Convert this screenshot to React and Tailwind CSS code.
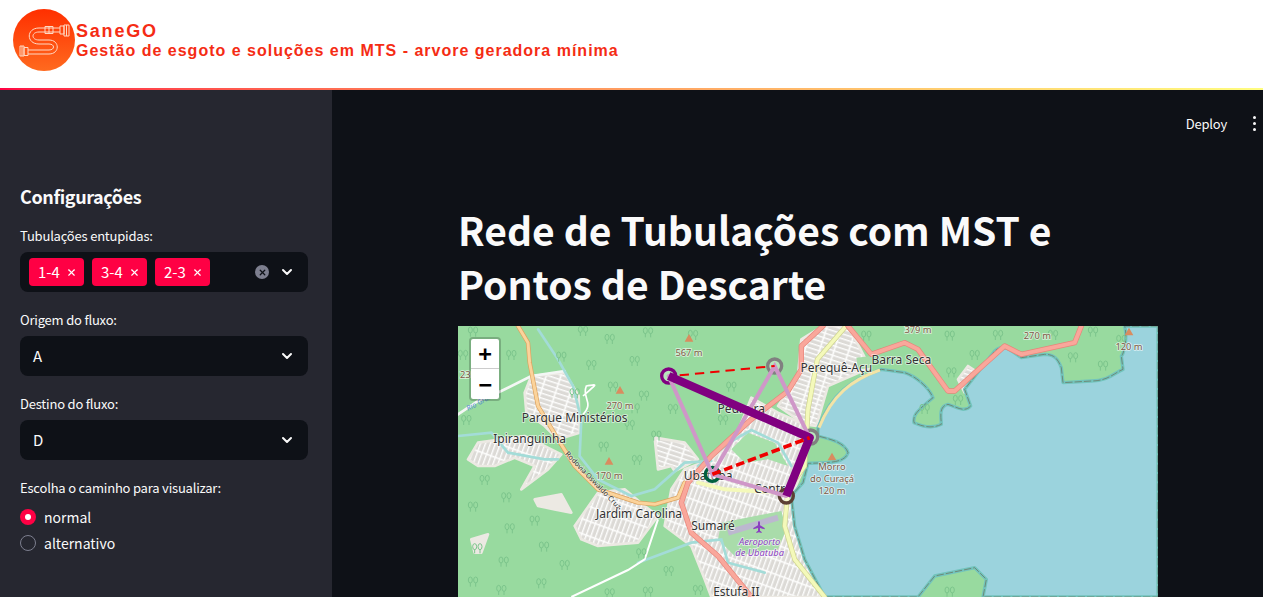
import React from "react";
import { ChevronDown, X } from "lucide-react";

// map coords are the 3x zoomed ones, viewBox is 2100x813 for a 700x271 box
const trees = [
  [15, 90], [45, 20], [90, 90], [160, 90], [310, 95], [375, 18], [455, 42], [570, 22], [705, 30], [530, 108],
  [400, 120], [350, 205], [465, 185], [558, 212], [645, 252], [530, 250], [820, 185], [795, 285],
  [25, 285], [515, 300], [437, 365], [537, 405], [595, 332], [80, 465], [145, 517], [45, 545], [230, 587],
  [155, 610], [258, 665], [58, 670], [320, 720], [137, 710], [45, 770], [130, 795], [250, 775], [455, 805],
  [550, 685], [632, 738], [720, 795], [570, 800], [1225, 32], [1475, 32], [1620, 30], [1785, 30], [1905, 20],
  [1550, 90], [1480, 142], [1845, 97], [1935, 122], [1400, 252], [1500, 225], [1990, 45], [1475, 800],
];

const peaks = [
  [693, 36], [486, 192], [453, 405], [1122, 392], [2013, 17],
];

const labels = [
  ["567 m", 693, 90, "peak"], ["270 m", 486, 248, "peak"], ["170 m", 453, 460, "peak"], ["23", 22, 155, "peak"],
  ["379 m", 1380, 20, "peak"], ["270 m", 1738, 40, "peak"], ["120 m", 2013, 72, "peak"],
  ["Morro", 1122, 433, "peak"], ["do Curaçá", 1122, 468, "peak"], ["120 m", 1122, 504, "peak"],
  ["Parque Ministérios", 350, 289, "place"], ["Ipiranguinha", 215, 350, "place"], ["Jardim Carolina", 543, 575, "place"],
  ["Sumaré", 765, 612, "place"], ["Estufa II", 835, 811, "place"], ["Ubatuba", 750, 461, "place"], ["Pedreira", 850, 262, "place"],
  ["Centro", 945, 502, "place"], ["Perequê-Açu", 1135, 137, "place"], ["Barra Seca", 1330, 115, "place"],
];

function Trees() {
  return (
    <g fill="none" stroke="#7cc58c" strokeWidth="3">
      {trees.map(([x, y], i) => (
        <g key={i}>
          <ellipse cx={x - 8} cy={y - 8} rx="6" ry="9" />
          <ellipse cx={x + 8} cy={y - 8} rx="6" ry="9" />
          <path d={`M${x - 8} ${y} v12 M${x + 8} ${y} v12`} />
        </g>
      ))}
    </g>
  );
}

function MapSvg() {
  const coast =
    "M2100 0 L2000 0 C2010 40 1995 90 1990 90 L1995 130 C1970 140 1950 165 1900 165 L1815 170 L1810 125 C1800 100 1790 85 1760 85 L1690 95 C1660 75 1640 50 1610 75 L1520 190 L1538 240 C1520 260 1500 245 1470 235 C1440 240 1450 280 1450 295 C1420 310 1390 300 1368 290 C1365 270 1370 260 1425 215 C1410 180 1370 150 1340 140 L1270 130 C1180 160 1120 205 1080 305 L1080 330 C1120 340 1160 350 1170 380 C1160 410 1120 410 1050 412 L1035 470 L1000 510 L1010 600 L1040 700 L1100 813 L1380 813 L1430 750 L1550 725 L1585 760 L1575 813 L2100 813 Z";
  const city =
    "M680 430 L760 400 L830 340 L880 215 L960 260 L1050 300 L1040 420 L1000 510 L1010 600 L1040 700 L1090 813 L760 813 L740 760 L700 660 L620 600 L640 490 Z";
  const pereque = "M1030 40 L1095 0 L1170 0 L1197 50 L1236 125 L1110 180 L1075 300 L1040 295 L960 240 L1020 150 Z";
  const motorwayA = "M880 813 L780 690 L700 620 L670 530 L690 470 L760 390 L880 280 L990 195 L1030 130 L1030 60 L1095 0";
  const motorwayB = "M1170 0 L1240 85 L1340 50 L1380 70 L1470 195 L1490 195 L1640 60 L1690 85 L1850 50 L1870 0";
  const yellow = "M1160 5 L1078 100 L1050 250 L1040 420 L990 490 L980 600 L1010 700 L1100 813";
  const orange = "M180 0 L210 50 L215 110 L240 240 L300 340 L350 420 L420 490 L540 530 L590 535 L660 515 L680 470";

  return (
    <svg viewBox="0 0 2100 813" className="block w-[700px] h-[271px]">
      <defs>
        <pattern id="grid" width="42" height="14" patternUnits="userSpaceOnUse" patternTransform="rotate(18)">
          <rect width="42" height="14" fill="#dcdad6" />
          <path d="M0 2 H42 M4 0 V14" stroke="#fdfdfc" strokeWidth="5" />
        </pattern>
        <pattern id="grid2" width="42" height="14" patternUnits="userSpaceOnUse" patternTransform="rotate(-70)">
          <rect width="42" height="14" fill="#dcdad6" />
          <path d="M0 2 H42 M4 0 V14" stroke="#fdfdfc" strokeWidth="5" />
        </pattern>
      </defs>

      <rect width="2100" height="813" fill="#98da9f" />

      {/* bairros */}
      <g stroke="#ece9e3" strokeWidth="8" strokeLinejoin="round">
        <path fill="url(#grid)" d="M220 150 L320 140 L362 210 L365 320 L300 340 L260 300 L205 260 L200 200 Z" />
        <path fill="url(#grid2)" d="M60 350 L130 340 L200 330 L280 370 L310 385 L270 430 L190 490 L230 420 L170 395 L110 420 L60 420 L30 400 Z" />
        <path fill="url(#grid)" d="M590 335 L680 350 L720 400 L650 435 L640 420 L600 430 Z" />
        <path fill="url(#grid2)" d={city} />
        <path fill="url(#grid)" d={pereque} />
        <path fill="url(#grid2)" d="M350 600 L420 500 L500 490 L560 540 L600 570 L540 650 L420 660 L370 640 Z" />
        <path fill="#ece9e3" d="M230 520 L310 505 L340 560 L290 550 L240 540 Z M40 640 L90 625 L70 680 L50 680 Z" />
        <path fill="url(#grid)" d="M1500 160 L1530 120 L1560 140 L1520 200 Z" />
      </g>
      <path fill="#a7e0aa" d="M820 370 L870 320 L950 350 L990 420 L930 400 L860 410 Z" />
      <path fill="#a9dcaa" d="M790 590 L970 555 L985 610 L960 670 L830 690 L780 640 Z" />
      <path fill="#a9dcaa" d="M1195 95 L1240 90 L1240 125 L1200 130 Z" />

      {/* rios */}
      <g fill="none" stroke="#a3dcd8" strokeWidth="8" strokeLinecap="round">
        <path d="M0 265 L60 225 L130 195 L220 150 L320 135" stroke="#f4f7f5" strokeWidth="8" />
        <path d="M240 10 L300 100 L345 180 L370 280 L365 390 L420 460 L520 510 L590 490 L680 410 L760 405" />
        <path d="M0 330 L100 320 L150 380 L260 400 L300 400" />
        <path d="M720 420 L830 340 L880 312 L960 350 L1000 420" />
        <path d="M540 710 L620 680 L700 650 L790 640 L810 710 L920 740" />
      </g>
      <path d="M340 813 L510 732 L560 700 L600 580" fill="none" stroke="#fff" strokeWidth="6" />
      <path d="M375 210 C420 170 420 175 385 180 C370 215 410 230 375 265" fill="none" stroke="#fff" strokeWidth="5" />

      {/* mar */}
      <path d={coast} fill="#9bd3dd" stroke="#72c4bd" strokeWidth="10" strokeLinejoin="round" />
      <path d={coast} fill="none" stroke="#6d8a78" strokeWidth="3" strokeDasharray="22 6" />
      <path d="M1266 132 C1180 162 1122 207 1083 305" fill="none" stroke="#f3e3a6" strokeWidth="9" />

      <Trees />

      {/* aeroporto */}
      <path d="M810 620 L960 575" stroke="#bcb8cf" strokeWidth="18" />
      <path
        d="M903 586 c2 0 3 2 3 5 v7 l14 8 v4 l-14 -4 v8 l5 4 v3 l-8 -2 -8 2 v-3 l5 -4 v-8 l-14 4 v-4 l14 -8 v-7 c0 -3 1 -5 3 -5 z"
        fill="#8a3fc0"
      />

      {/* estradas */}
      <g fill="none" strokeLinejoin="round" strokeLinecap="round">
        <path d={orange} stroke="#dca25e" strokeWidth="13" />
        <path d={orange} stroke="#fbd39b" strokeWidth="9" />
        <path d={yellow} stroke="#cfd48e" strokeWidth="15" />
        <path d={yellow} stroke="#f4f9ba" strokeWidth="11" />
        <path d="M720 470 L800 490 L970 500" stroke="#f4f9ba" strokeWidth="12" />
        <g stroke="#e8847a" strokeWidth="16">
          <path d={motorwayA} />
          <path d={motorwayB} />
        </g>
        <g stroke="#f9a79b" strokeWidth="12">
          <path d={motorwayA} />
          <path d={motorwayB} />
        </g>
      </g>

      {peaks.map(([x, y], i) => (
        <path key={i} d={`M${x - 13} ${y + 11} L${x} ${y - 12} L${x + 13} ${y + 11} Z`} fill="#d98c5f" />
      ))}

      {/* rotulos */}
      <g fontFamily="'Noto Sans', sans-serif" textAnchor="middle" paintOrder="stroke" stroke="#ffffff" strokeOpacity="0.65" strokeWidth="5">
        {labels.map(([t, x, y, kind]) => (
          <text key={t + x} x={x} y={y} fontSize={kind === "peak" ? 28 : 36} fill={kind === "peak" ? "#7d5a45" : "#333333"}>
            {t}
          </text>
        ))}
        <text x="905" y="656" fontSize="28" fontStyle="italic" fill="#8a3fc0">Aeroporto</text>
        <text x="905" y="691" fontSize="28" fontStyle="italic" fill="#8a3fc0">de Ubatuba</text>
      </g>
      <text transform="translate(320 385) rotate(46)" fontFamily="'Noto Sans', sans-serif" fontSize="22" fill="#333" stroke="#fff" strokeOpacity="0.5" strokeWidth="4" paintOrder="stroke">Rodovia Oswaldo Cruz</text>
      <text transform="translate(30 255) rotate(-28)" fontFamily="'Noto Sans', sans-serif" fontSize="22" fontStyle="italic" fill="#5a8fd0">Rio Grande</text>

      {/* rede: os aneis ficam por baixo das linhas */}
      <g fill="#ffffff" fillOpacity="0.3" strokeWidth="10">
        <circle cx="632" cy="150" r="21" stroke="#800080" />
        <circle cx="950" cy="120" r="21" stroke="#808080" />
        <circle cx="1058" cy="333" r="21" stroke="#808080" />
        <circle cx="763" cy="445" r="21" stroke="#006040" />
        <circle cx="985" cy="510" r="21" stroke="#5c4033" />
      </g>
      <g fill="none">
        <path d="M632 150 L763 445 L950 120 L1055 335 M763 445 L985 510" stroke="#cf97c8" strokeWidth="12" strokeLinecap="round" />
        <path d="M632 150 L1055 335 L985 510" stroke="#800080" strokeWidth="25" strokeLinejoin="round" />
        <path d="M665 148 L950 120" stroke="#f00000" strokeWidth="6" strokeDasharray="28 18" />
        <path d="M763 445 L1055 335" stroke="#f00000" strokeWidth="11" strokeDasharray="26 12" />
      </g>
    </svg>
  );
}

function Logo() {
  return (
    <svg viewBox="0 0 62 62" className="w-[62px] h-[62px] shrink-0">
      <defs>
        <linearGradient id="logoBg" x1="0" y1="0" x2="0" y2="1">
          <stop offset="0" stopColor="#ff2f00" />
          <stop offset="1" stopColor="#ff6a1f" />
        </linearGradient>
      </defs>
      <circle cx="31" cy="31" r="31" fill="url(#logoBg)" />
      <g fill="none" stroke="#ffd9c4" strokeWidth="1">
        <path d="M47 19 H26 C13 19 13 35 26 35 H36 C42 35 42 41 36 41 H15" />
        <path d="M47 23 H26 C18 23 18 31 26 31 H36 C47 31 47 45 36 45 H15" />
        <path d="M32 17.5 H40 V24.5 H32 Z M36 17.5 V24.5" />
        <path d="M47 17 H51 V25 H47 Z M51 16 H56 V27 H51 Z M53.5 16 V27" />
        <path d="M7 37 H11 V47 H7 Z M11 38.5 H15 V46.5 H11 Z M9 37 V47" />
      </g>
    </svg>
  );
}

function Select({ children }) {
  return (
    <div className="h-10 rounded-lg bg-[#0e1117] flex items-center pl-[13px] pr-[13px] text-[#fafafa] text-[15px]">
      <div className="flex-1">{children}</div>
      <ChevronDown size={16} strokeWidth={3} className="text-[#fafafa]" />
    </div>
  );
}

function Tag({ label }) {
  return (
    <div className="h-7 w-[55px] rounded bg-[#ff0044] text-white text-[15px] flex items-center pl-[9px] gap-[6px]">
      <span>{label}</span>
      <X size={11} strokeWidth={2.5} />
    </div>
  );
}

export default function App() {
  return (
    <div
      className="h-[597px] overflow-hidden bg-[#0e1117] flex flex-col"
      style={{ fontFamily: "'Noto Sans CJK JP', 'Noto Sans', sans-serif" }}
    >
      <header className="h-[88px] bg-white flex items-center pl-[13px] pb-[8px] shrink-0">
        <Logo />
        <div className="font-['Liberation_Sans',sans-serif] font-bold text-[#f52c14] ml-px">
          <div className="text-[18px] leading-[22px] tracking-[1.8px]">SaneGO</div>
          <div className="text-[16px] leading-[18px] tracking-[1px]">Gestão de esgoto e soluções em MTS - arvore geradora mínima</div>
        </div>
      </header>
      <div className="h-[2px] shrink-0 bg-gradient-to-r from-[#ff0044] to-[#fffd80]" />

      <div className="flex flex-1 min-h-0">
        <aside className="w-[332px] shrink-0 bg-[#262730] pl-5 pr-6 pt-[92px] text-[#fafafa]">
          <h2 className="text-[18px] leading-[28px] font-semibold tracking-[-0.4px]">Configurações</h2>
          <label className="block text-[13px] tracking-[-0.2px] leading-5 mt-[16px] mb-[6px]">Tubulações entupidas:</label>
          <div className="h-10 rounded-lg bg-[#0e1117] flex items-center pl-[9px] pr-[13px]">
            <div className="flex-1 flex gap-2">
              <Tag label="1-4" />
              <Tag label="3-4" />
              <Tag label="2-3" />
            </div>
            <div className="w-[14px] h-[14px] rounded-full bg-[#7d7f8f] flex items-center justify-center mr-[10px] text-[#0e1117]">
              <X size={9} strokeWidth={3.5} />
            </div>
            <ChevronDown size={16} strokeWidth={3} />
          </div>

          <label className="block text-[13px] tracking-[-0.2px] leading-5 mt-[18px] mb-[6px]">Origem do fluxo:</label>
          <Select>A</Select>

          <label className="block text-[13px] tracking-[-0.2px] leading-5 mt-[18px] mb-[6px]">Destino do fluxo:</label>
          <Select>D</Select>

          <label className="block text-[13px] tracking-[-0.2px] leading-5 mt-[18px] mb-[6px]">Escolha o caminho para visualizar:</label>
          <div className="flex items-center gap-2 h-[26px] text-[14px]">
            <span className="w-4 h-4 rounded-full bg-[#ff0044] flex items-center justify-center">
              <span className="w-1.5 h-1.5 rounded-full bg-white" />
            </span>
            normal
          </div>
          <div className="flex items-center gap-2 h-[26px] text-[14px]">
            <span className="w-4 h-4 rounded-full border border-[#7d7f8f] bg-[#262730]" />
            alternativo
          </div>
        </aside>

        <main className="flex-1 min-w-0 relative pl-[126px]">
          <div className="absolute right-[7px] top-[24px] flex items-center text-[#fafafa] text-[13px] tracking-[-0.2px]">
            <span className="mr-[26px]">Deploy</span>
            <span className="flex flex-col gap-[3px] w-[3px]">
              <i className="block w-[3px] h-[3px] rounded-full bg-[#fafafa]" />
              <i className="block w-[3px] h-[3px] rounded-full bg-[#fafafa]" />
              <i className="block w-[3px] h-[3px] rounded-full bg-[#fafafa]" />
            </span>
          </div>

          <h1 className="w-[700px] pt-[112px] text-[39px] tracking-[0.05px] leading-[54px] font-bold text-[#fafafa]">
            Rede de Tubulações com MST e Pontos de Descarte
          </h1>

          <div className="relative w-[700px] mt-[16px]">
            <MapSvg />
            <div className="absolute left-[11px] top-[11px] w-[32px] rounded border-2 border-black/20 bg-white overflow-hidden bg-clip-padding">
              <div className="h-[30px] flex items-center justify-center border-b border-[#ccc] text-black text-[22px] font-bold font-['DejaVu_Sans_Mono',monospace]">+</div>
              <div className="h-[30px] flex items-center justify-center text-black text-[22px] font-bold font-['DejaVu_Sans_Mono',monospace]">−</div>
            </div>
          </div>
        </main>
      </div>
    </div>
  );
}
